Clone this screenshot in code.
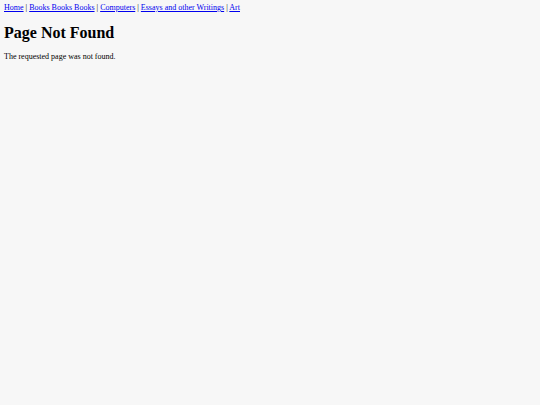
export default function App() {
  return (
    <div className="min-h-screen bg-[#f7f7f7] px-[4px] pt-[3px] text-black" style={{ fontFamily: '"Liberation Serif", "Times New Roman", serif' }}>
      <nav className="text-[8px] leading-[10px]">
        <a href="#" className="text-[#0000ee] underline">Home</a> | <a href="#" className="text-[#0000ee] underline">Books Books Books</a> | <a href="#" className="text-[#0000ee] underline">Computers</a> | <a href="#" className="text-[#0000ee] underline">Essays and other Writings</a> | <a href="#" className="text-[#0000ee] underline">Art</a>
      </nav>
      <h1 className="mt-[10px] text-[16px] font-bold leading-[19px]">Page Not Found</h1>
      <p className="mt-[10px] text-[8px] leading-[10px]">The requested page was not found.</p>
    </div>
  );
}
